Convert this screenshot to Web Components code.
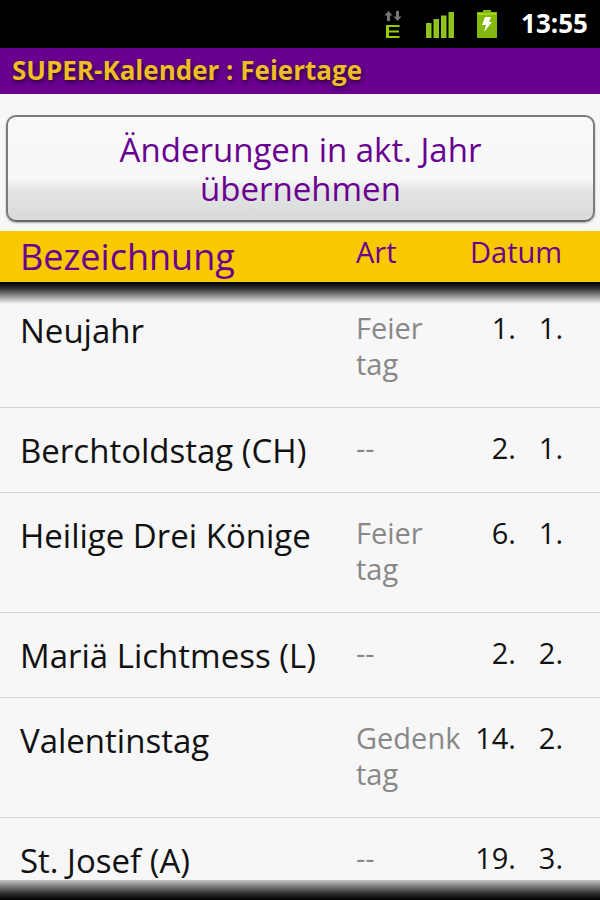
<!DOCTYPE html>
<html lang="de">
<head>
<meta charset="utf-8">
<meta name="viewport" content="width=device-width, initial-scale=1">
<title>SUPER-Kalender : Feiertage</title>
<style>
  html, body { margin: 0; height: 100%; }
  body { font-family: "Open Sans", "Noto Sans", sans-serif; background: #f7f7f7; overflow: hidden; }
</style>
</head>
<body>
<calendar-app>
  <status-bar slot="status">13:55</status-bar>
  <title-bar slot="title">SUPER-Kalender : Feiertage</title-bar>
  <glossy-button slot="action">Änderungen in akt. Jahr übernehmen</glossy-button>
  <holiday-table></holiday-table>
</calendar-app>

<script>
class ShadowElement extends HTMLElement {
  constructor() {
    super();
    this.attachShadow({ mode: "open" }).innerHTML = this.render();
  }
}

customElements.define("status-bar", class extends ShadowElement {
  render() {
    return `
    <style>
      :host { display: flex; justify-content: flex-end; align-items: center; height: 48px;
              padding: 0 12px; background: #000; color: #fff; font-size: 26px; font-weight: 700; }
      svg { display: block; height: 32px; }
      .data { width: 20px; margin-right: 22px; }
      .signal { width: 30px; margin-right: 21px; }
      .battery { width: 22px; margin-right: 23px; }
      time { line-height: 46px; padding-bottom: 2px; }
    </style>
    <svg class="data" viewBox="0 0 20 32" role="img" aria-label="EDGE">
      <path fill="#777" d="M5.500 3L9.500 7.500H7V13H4V7.500H1.500zM13 3H16V8.500H18.500L14.500 13L10.500 8.500H13z"/>
      <path fill="#9c0" d="M3 17H16.500V19H6V22.500H16V24.500H6V28H16.500V30H3z"/>
    </svg>
    <svg class="signal" viewBox="0 0 30 32" role="img" aria-label="Signal">
      <path fill="#8fc31c" d="M1 15H6.500V30H1zM8.500 11H14V30H8.500zM16 7.500H21.500V30H16zM23.500 4H29V30H23.500z"/>
    </svg>
    <svg class="battery" viewBox="0 0 22 32" role="img" aria-label="Akku wird geladen">
      <path fill="#85b80c" d="M1 4H7V2H15V4H21V30H1z"/>
      <path fill="#a4d614" d="M2 5H20V7H2z"/>
      <path fill="#fff" d="M9 9H15L13 14H16L8 24L10 17H6z"/>
    </svg>
    <time><slot></slot></time>`;
  }
});

customElements.define("title-bar", class extends ShadowElement {
  render() {
    return `
    <style>
      :host { display: block; background: #69008f; }
      h1 { margin: 0; padding: 4px 12px 6px; font-size: 26px; line-height: 36px; font-weight: 700;
           color: #f0bd24; text-shadow: 1px 2px 4px #200030; white-space: nowrap; }
    </style>
    <h1><slot></slot></h1>`;
  }
});

customElements.define("glossy-button", class extends ShadowElement {
  render() {
    return `
    <style>
      :host { display: block; padding: 21px 5px 9px 6px; }
      button { display: block; width: 100%; padding: 13px 96px 12px; font: inherit; font-size: 33px;
               line-height: 39px; color: #69008f; border: 2px solid #7b7b7b; border-bottom-color: #686868;
               border-radius: 10px; box-shadow: 0 1px 2px #aaa;
               background: linear-gradient(#f9f9f9 0%, #f7f7f7 60%, #e3e5e4 72%, #d7dad8 100%); }
    </style>
    <button type="button"><slot></slot></button>`;
  }
});

const holidays = [
  ["Neujahr", "Feier\ntag", "1.", "1."],
  ["Berchtoldstag (CH)", "--", "2.", "1."],
  ["Heilige Drei Könige", "Feier\ntag", "6.", "1."],
  ["Mariä Lichtmess (L)", "--", "2.", "2."],
  ["Valentinstag", "Gedenk\ntag", "14.", "2."],
  ["St. Josef (A)", "--", "19.", "3."]
];

customElements.define("holiday-table", class extends ShadowElement {
  render() {
    const rows = holidays.map(([name, kind, day, month]) =>
      `<tr><td class="name">${name}</td><td class="kind">${kind}</td><td class="date">${day}</td><td class="date">${month}</td></tr>`).join("");
    return `
    <style>
      :host { display: block; }
      table { width: 100%; table-layout: fixed; border-collapse: separate; border-spacing: 0; }
      col.kind { width: 106px; }
      col.day { width: 54px; }
      col.month { width: 84px; }
      th, td { padding: 0; text-align: left; vertical-align: top; font-weight: 400; }
      th { box-sizing: border-box; height: 51px; background: #f8c800; color: #69008f;
           font-size: 29px; line-height: 42px; }
      th:first-child { padding-left: 20px; font-size: 36px; line-height: 51px; }
      th:last-child { padding-left: 8px; }
      td { padding: 22px 0 25px; border-bottom: 1px solid #d2d2d2; font-size: 29px; line-height: 36px; }
      td.name { padding: 24px 0 23px 20px; font-size: 33px; line-height: 37px; color: #111; }
      td.kind { color: #888; white-space: pre-line; }
      td.date { text-align: right; color: #111; }
      td.date:last-child { padding-right: 37px; }
      tbody::before { content: ""; display: block; height: 6px; }
    </style>
    <table>
      <colgroup><col><col class="kind"><col class="day"><col class="month"></colgroup>
      <thead><tr><th scope="col">Bezeichnung</th><th scope="col">Art</th><th scope="colgroup" colspan="2">Datum</th></tr></thead>
      <tbody>${rows}</tbody>
    </table>`;
  }
});

customElements.define("calendar-app", class extends ShadowElement {
  render() {
    return `
    <style>
      :host { display: flex; flex-direction: column; height: 100vh; }
      main { position: relative; flex: 1; min-height: 0; overflow: hidden; }
      /* Fading edges lie over the list at the top and bottom of its scroll area. */
      .edge { position: absolute; left: 0; right: 0; height: 22px; pointer-events: none; }
      .top { top: 51px; background: linear-gradient(#000 0%, #000c 30%, #0000 100%); }
      .bottom { bottom: 0; height: 20px; background: linear-gradient(#0003 0%, #000c 65%, #000 100%); }
    </style>
    <slot name="status"></slot>
    <slot name="title"></slot>
    <slot name="action"></slot>
    <main><slot></slot><div class="edge top"></div><div class="edge bottom"></div></main>`;
  }
});
</script>
</body>
</html>
